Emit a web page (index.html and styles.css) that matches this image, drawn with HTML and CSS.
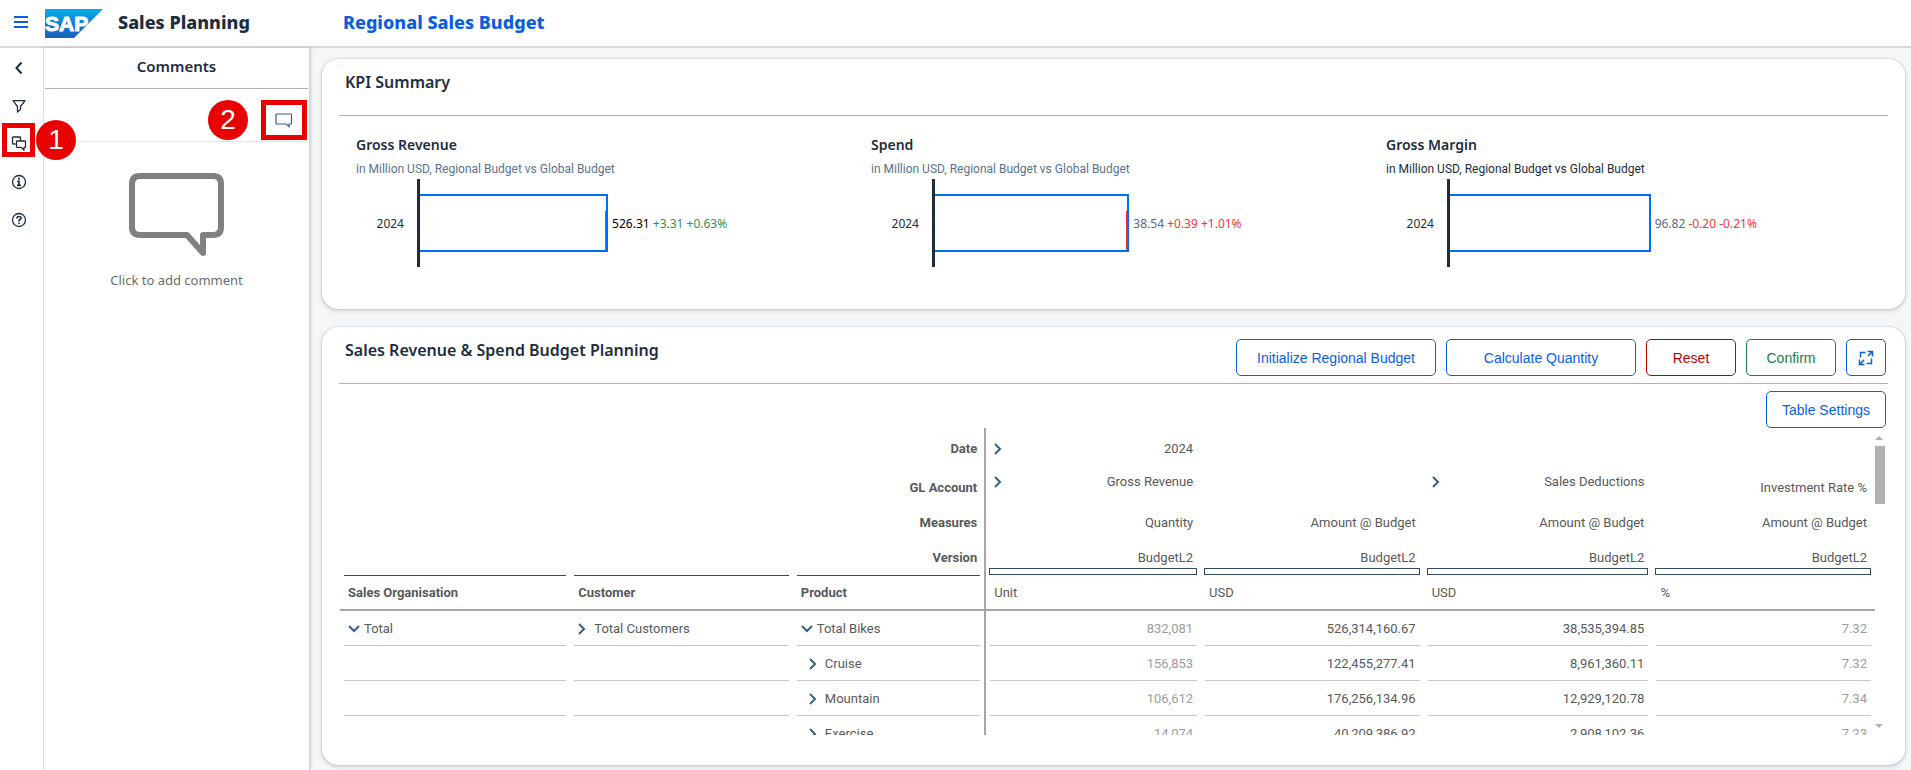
FILE: index.html
```html
<!DOCTYPE html>
<html lang="en">
<head>
<meta charset="utf-8">
<title>Sales Planning</title>
<link rel="stylesheet" href="styles.css">
</head>
<body>
<header class="topbar">
  <button class="icon-btn menu-btn" aria-label="Menu"><svg width="14" height="12" viewBox="0 0 14 12"><path d="M0 1h14M0 6h14M0 11h14" stroke="#0a60dc" stroke-width="2"/></svg></button>
  <svg class="logo" width="58" height="29" viewBox="0 0 58 29" role="img" aria-label="SAP">
    <defs><linearGradient id="sap" x1="0" y1="0" x2="0" y2="1"><stop offset="0" stop-color="#00b1eb"/><stop offset=".5" stop-color="#0a80d0"/><stop offset="1" stop-color="#1e5fbb"/></linearGradient></defs>
    <path d="M0 0h58L29 29H0z" fill="url(#sap)"/>
    <text class="logo-text" x="0" y="22">SAP</text>
  </svg>
  <h1 class="app-title">Sales Planning</h1>
  <h2 class="page-title">Regional Sales Budget</h2>
</header>
<div class="shell">
  <nav class="rail" aria-label="Tools">
    <button class="icon-btn rail-btn" aria-label="Collapse"><svg width="16" height="16" viewBox="0 0 16 16"><path d="M10.500 2.500L5.500 8l5 5.500" fill="none" stroke="#1d2d3e" stroke-width="2"/></svg></button>
    <button class="icon-btn rail-btn" aria-label="Filter"><svg width="16" height="16" viewBox="0 0 16 16"><path d="M2 2.700h12L9.500 8.500v3L6.500 14V8.500z" fill="none" stroke="#1d2d3e" stroke-width="1.300" stroke-linejoin="round"/></svg></button>
    <button class="icon-btn rail-btn" aria-label="Comments"><svg width="16" height="16" viewBox="0 0 16 16"><path d="M4.500 8H2.200Q1.500 8 1.500 7.300V1.700Q1.500 1 2.200 1h6.600Q9.500 1 9.500 1.700V4.500M6.200 5h7.600q.7 0 .7.700v5q0 .7-.7.700H13v2.800l-2.800-2.800H6.200q-.7 0-.7-.7v-5q0-.7.700-.7z" fill="none" stroke="#1d2d3e" stroke-width="1.300" stroke-linejoin="round"/></svg><span class="callout"></span><span class="step step-1">1</span></button>
    <button class="icon-btn rail-btn" aria-label="Information"><svg width="16" height="16" viewBox="0 0 16 16"><circle cx="8" cy="8" r="6.500" fill="none" stroke="#1d2d3e" stroke-width="1.300"/><path d="M8 3.700v2M6.200 7.300H8v4M6 11.300h4" fill="none" stroke="#1d2d3e" stroke-width="1.700"/></svg></button>
    <button class="icon-btn rail-btn" aria-label="Help"><svg width="16" height="16" viewBox="0 0 16 16"><circle cx="8" cy="8" r="6.500" fill="none" stroke="#1d2d3e" stroke-width="1.300"/><path d="M5.900 6.500Q5.900 4.500 8 4.500t2.100 1.800Q10.100 7.400 8 8.200v1.300M8 10.400v1.700" fill="none" stroke="#1d2d3e" stroke-width="1.600"/></svg></button>
  </nav>
  <aside class="comments">
    <h3 class="comments-title">Comments</h3>
    <div class="comments-bar">
      <span class="step">2</span>
      <button class="icon-btn add-comment" aria-label="Add comment"><svg width="18" height="15" viewBox="0 0 18 15"><path d="M2 1h13.500q1 0 1 1v8q0 1-1 1H14v2.700L11.200 11H2q-1 0-1-1V2q0-1 1-1z" fill="none" stroke="#35618e" stroke-width="1.200"/></svg></button>
    </div>
    <button class="icon-btn empty">
      <svg width="96" height="84" viewBox="0 0 96 84"><path d="M11 3h73q8 0 8 8v43q0 8-8 8H74v18L58 62H11q-8 0-8-8V11q0-8 8-8z" fill="none" stroke="#808080" stroke-width="6" stroke-linejoin="round"/></svg>
      <span>Click to add comment</span>
    </button>
  </aside>
  <main class="content">
    <section class="card">
      <div class="card-head"><h3 class="card-title">KPI Summary</h3></div>
      <div class="kpis">
        <article class="kpi">
          <h4 class="kpi-title">Gross Revenue</h4>
          <p class="kpi-sub">in Million USD, Regional Budget vs Global Budget</p>
          <div class="chart"><span class="chart-label">2024</span><div class="plot"><div class="bar" style="width:45%"><i class="delta up"></i></div><span class="value dark">526.31 <b class="pos">+3.31 +0.63%</b></span></div></div>
        </article>
        <article class="kpi">
          <h4 class="kpi-title">Spend</h4>
          <p class="kpi-sub">in Million USD, Regional Budget vs Global Budget</p>
          <div class="chart"><span class="chart-label">2024</span><div class="plot"><div class="bar" style="width:46.500%"><i class="delta down"></i></div><span class="value">38.54 <b class="neg">+0.39 +1.01%</b></span></div></div>
        </article>
        <article class="kpi">
          <h4 class="kpi-title">Gross Margin</h4>
          <p class="kpi-sub black">in Million USD, Regional Budget vs Global Budget</p>
          <div class="chart"><span class="chart-label">2024</span><div class="plot"><div class="bar" style="width:48%"></div><span class="value">96.82 <b class="neg">-0.20 -0.21%</b></span></div></div>
        </article>
      </div>
    </section>
    <section class="card">
      <div class="card-head">
        <h3 class="card-title">Sales Revenue &amp; Spend Budget Planning</h3>
        <div class="actions">
          <button class="btn w200">Initialize Regional Budget</button>
          <button class="btn w190">Calculate Quantity</button>
          <button class="btn w90 red">Reset</button>
          <button class="btn w90 green">Confirm</button>
          <button class="btn w40" aria-label="Full screen"><svg width="16" height="16" viewBox="0 0 16 16"><path d="M7.500 2.500h-5v5M8.500 13.500h5v-5M9.500 1.500h5v5M14.500 1.500L10 6M6.500 14.500h-5v-5M1.500 14.500L6 10" fill="none" stroke="#0a60dc" stroke-width="1.500"/></svg></button>
        </div>
      </div>
      <div class="table-tools"><button class="btn w120">Table Settings</button></div>
      <div class="grid-wrap">
        <div class="grid-view">
          <table class="grid">
            <colgroup><col class="c1"><col class="c2"><col class="c3"><col class="c4"><col class="c5"><col class="c6"><col class="c7"></colgroup>
            <thead>
              <tr class="date"><td></td><td></td><th class="axis">Date</th><td class="num"><span class="pair"><svg class="chev" width="8" height="12" viewBox="0 0 8 12"><path d="M1 1l5 5-5 5"/></svg>2024</span></td><td></td><td></td><td></td></tr>
              <tr class="account"><td></td><td></td><th class="axis">GL Account</th><td class="num top"><span class="pair"><svg class="chev" width="8" height="12" viewBox="0 0 8 12"><path d="M1 1l5 5-5 5"/></svg>Gross Revenue</span></td><td></td><td class="num top"><span class="pair"><svg class="chev" width="8" height="12" viewBox="0 0 8 12"><path d="M1 1l5 5-5 5"/></svg>Sales Deductions</span></td><td class="num">Investment Rate %</td></tr>
              <tr class="measure"><td></td><td></td><th class="axis">Measures</th><td class="num">Quantity</td><td class="num">Amount @ Budget</td><td class="num">Amount @ Budget</td><td class="num">Amount @ Budget</td></tr>
              <tr class="version"><td class="ln"></td><td class="ln"></td><th class="axis ln">Version</th><td class="num box">BudgetL2</td><td class="num box">BudgetL2</td><td class="num box">BudgetL2</td><td class="num box">BudgetL2</td></tr>
              <tr class="names"><th>Sales Organisation</th><th>Customer</th><th>Product</th><td>Unit</td><td>USD</td><td>USD</td><td>%</td></tr>
            </thead>
            <tbody>
              <tr><td><span class="node"><svg class="chev" width="12" height="8" viewBox="0 0 12 8"><path d="M1 1l5 5 5-5"/></svg>Total</span></td><td><span class="node"><svg class="chev" width="12" height="12" viewBox="0 0 12 12"><path d="M1 1l5 5-5 5"/></svg>Total Customers</span></td><td><span class="node"><svg class="chev" width="12" height="8" viewBox="0 0 12 8"><path d="M1 1l5 5 5-5"/></svg>Total Bikes</span></td><td class="num dim">832,081</td><td class="num">526,314,160.67</td><td class="num">38,535,394.85</td><td class="num dim">7.32</td></tr>
              <tr><td></td><td></td><td><span class="node child"><svg class="chev" width="12" height="12" viewBox="0 0 12 12"><path d="M1 1l5 5-5 5"/></svg>Cruise</span></td><td class="num dim">156,853</td><td class="num">122,455,277.41</td><td class="num">8,961,360.11</td><td class="num dim">7.32</td></tr>
              <tr><td></td><td></td><td><span class="node child"><svg class="chev" width="12" height="12" viewBox="0 0 12 12"><path d="M1 1l5 5-5 5"/></svg>Mountain</span></td><td class="num dim">106,612</td><td class="num">176,256,134.96</td><td class="num">12,929,120.78</td><td class="num dim">7.34</td></tr>
              <tr><td></td><td></td><td><span class="node child"><svg class="chev" width="12" height="12" viewBox="0 0 12 12"><path d="M1 1l5 5-5 5"/></svg>Exercise</span></td><td class="num dim">14,074</td><td class="num">40,209,386.92</td><td class="num">2,908,102.36</td><td class="num dim">7.23</td></tr>
            </tbody>
          </table>
        </div>
        <div class="scroll" aria-hidden="true">
          <svg width="8" height="4" viewBox="0 0 8 4"><path d="M0 4l4-4 4 4z" fill="#b0b0b0"/></svg>
          <span class="thumb"></span>
          <svg class="down" width="8" height="4" viewBox="0 0 8 4"><path d="M0 0l4 4 4-4z" fill="#b0b0b0"/></svg>
        </div>
      </div>
    </section>
  </main>
</div>
</body>
</html>
```

FILE: styles.css
```css
* { box-sizing: border-box; }
body { margin: 0; min-height: 100vh; display: flex; flex-direction: column; background: #f5f6f7; color: #1d2d3e; font-family: "Noto Sans", sans-serif; font-size: 13px; overflow: hidden; }
h1, h2, h3, h4, p { margin: 0; }
svg { display: block; flex: none; }
.icon-btn { border: 0; padding: 0; background: none; color: inherit; font: inherit; display: flex; align-items: center; justify-content: center; }

.topbar { display: flex; align-items: center; height: 48px; padding: 0 14px 2px; background: #fff; border-bottom: 2px solid #d9d9d9; }
.menu-btn { width: 14px; }
.logo { margin: 2px 15px 0 17px; }
.logo-text { font: bold 21px "Liberation Sans", sans-serif; fill: #fff; stroke: #fff; }
.app-title, .page-title { font-size: 18px; line-height: 24px; font-weight: 800; white-space: nowrap; }
.app-title { width: 225px; }
.page-title { color: #0a60dc; }

.shell { flex: 1; display: flex; }
.rail { width: 44px; padding: 12px 6px; background: #fff; border-right: 1px solid #e5e5e5; display: flex; flex-direction: column; gap: 22px; }
.rail-btn { position: relative; width: 26px; height: 16px; }
.callout { position: absolute; left: -4px; top: -13px; width: 33px; height: 34px; border: 5px solid #e90000; }
.step { width: 40px; height: 40px; border-radius: 50%; background: #e90000; color: #fff; font: 28px/40px "Liberation Sans", sans-serif; text-align: center; }
.step-1 { position: absolute; left: 30px; top: -16px; z-index: 2; }

.comments { width: 266px; background: #fff; border-right: 1px solid #d2d5d9; box-shadow: 1px 0 3px rgba(34, 53, 72, .2); padding: 0 1px; display: flex; flex-direction: column; }
.comments-title { height: 41px; font-size: 15px; line-height: 36px; font-weight: 600; text-align: center; border-bottom: 1px solid #a8b3bf; }
.comments-bar { height: 53px; padding-bottom: 1px; display: flex; align-items: flex-end; justify-content: flex-end; gap: 13px; border-bottom: 1px solid #e3e5e8; }
.add-comment { width: 46px; height: 40px; border: 5px solid #e90000; margin-right: 1px; }
.empty { flex-direction: column; gap: 13px; margin-top: 31px; color: #6a6d70; line-height: 20px; }

.content { flex: 1; min-width: 0; padding: 11px 6px 5px 12px; display: flex; flex-direction: column; gap: 18px; }
.card { background: #fff; border-radius: 16px; box-shadow: 0 0 2px rgba(34, 53, 72, .3), 0 2px 4px rgba(34, 53, 72, .16); padding: 0 17px; }
.card-head { display: flex; justify-content: space-between; align-items: flex-start; height: 57px; padding: 12px 2px 0 6px; border-bottom: 1px solid #a8b3bf; }
.card-title { font-size: 16px; line-height: 22px; font-weight: 600; }

.kpis { display: grid; grid-template-columns: repeat(3, 1fr); padding: 18px 4px 42px 0; }
.kpi { padding: 0 16px 0 17px; }
.kpi-title { font-size: 14px; line-height: 22px; font-weight: 600; }
.kpi-sub { font: 12px/18px Roboto, sans-serif; margin: 4px 0 1px; color: #5b738b; white-space: nowrap; }
.kpi-sub.black { color: #1d2d3e; }
.chart { display: flex; align-items: center; font-size: 12px; }
.chart-label { width: 61px; padding-right: 13px; text-align: right; }
.plot { flex: 1; height: 88px; border-left: 3px solid #1d2d3e; display: flex; align-items: center; }
.bar { position: relative; height: 58px; border: 2px solid #0070f2; border-left: 0; }
.delta { position: absolute; right: 0; bottom: 0; width: 1px; height: 39px; }
.delta.up { background: #36a41d; }
.delta.down { background: #ee3939; }
.value { margin-left: 4px; color: #556b82; white-space: nowrap; }
.value.dark { color: #000; }
.value b { font-weight: 400; }
.pos { color: #30914c; }
.neg { color: #ee3939; }

.actions { display: flex; gap: 10px; }
.btn { height: 37px; padding: 0; display: flex; align-items: center; justify-content: center; border: 1px solid #0a60dc; border-radius: 5px; background: #fff; color: #0a60dc; font: 14px "Liberation Sans", sans-serif; }
.w200 { width: 200px; }
.w190 { width: 190px; }
.w120 { width: 120px; }
.w90 { width: 90px; }
.w40 { width: 40px; }
.red { color: #b00; border-color: #b00; }
.green { color: #188045; border-color: #188045; }
.table-tools { display: flex; justify-content: flex-end; padding: 7px 2px 0 0; }

.grid-wrap { display: flex; padding: 0 3px 30px 1px; }
.grid-view { flex: 1; min-width: 0; height: 307px; overflow: hidden; }
.grid { width: 100%; table-layout: fixed; border-collapse: separate; border-spacing: 0; color: #58595b; font-family: Roboto, sans-serif; line-height: 16px; }
.grid th, .grid td { height: 35px; padding: 0 8px; text-align: left; vertical-align: middle; font-weight: 400; white-space: nowrap; }
.grid th { font-weight: 700; }
.grid tr > :nth-child(3) { border-right: 2px solid #a6a6a6; padding-right: 7px; }
.grid .axis, .grid .num { text-align: right; }
.c1 { width: 15%; }
.c2 { width: 14.500%; }
.c3 { width: 12.600%; }
.c4 { width: 14%; }
.c5 { width: 14.500%; }
.c6 { width: 14.900%; }
.c7 { width: 14.500%; }
.grid .date > * { height: 42px; }
.grid .account > .top { vertical-align: top; padding-top: 4px; }
.grid .version > * { height: 36px; padding-bottom: 1px; }
.grid .version > .ln { background: linear-gradient(#354a5f, #354a5f) center bottom / calc(100% - 8px) 1px no-repeat; }
.grid .version > .box { position: relative; }
.grid .box::after { content: ""; position: absolute; left: 3px; right: 4px; bottom: 1px; height: 5px; border: 1px solid #354a5f; }
.grid .names > * { border-bottom: 2px solid #a6a6a6; }
.grid tbody td { background: linear-gradient(#c4c6c8, #c4c6c8) center bottom / calc(100% - 8px) 1px no-repeat; }
.grid .dim { color: #9c9c9c; }
.pair { display: flex; justify-content: space-between; align-items: center; }
.node { display: flex; align-items: center; gap: 4px; }
.child { padding-left: 8px; }
.chev path { fill: none; stroke: #346187; stroke-width: 2; }
.scroll { width: 10px; display: flex; flex-direction: column; padding: 8px 0 7px; }
.thumb { height: 58px; margin-top: 6px; background: #b0b0b0; }
.down { margin-top: auto; }
```
